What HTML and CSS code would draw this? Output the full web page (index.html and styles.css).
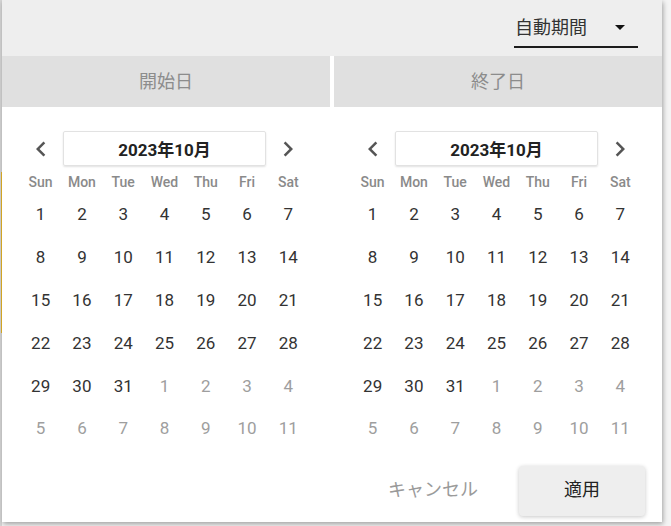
FILE: index.html
```html
<!DOCTYPE html>
<html lang="ja">
<head>
<meta charset="utf-8">
<title>期間選択</title>
<link rel="stylesheet" href="styles.css">
</head>
<body>
<div class="dialog">
  <div class="dialog-head">
    <div class="select">
      <span class="select-text">自動期間</span>
      <svg class="select-arrow" viewBox="0 0 24 24" width="24" height="24"><path d="M7 10l5 5 5-5z" fill="#111"/></svg>
    </div>
  </div>
  <div class="tabs">
    <div class="tab">開始日</div>
    <div class="tab">終了日</div>
  </div>
  <div class="calendars">
    <div class="cal">
      <div class="cal-nav">
        <span class="nav-btn"><svg viewBox="0 0 24 24" width="30" height="30"><path d="M15.41 7.41L14 6l-6 6 6 6 1.41-1.41L10.83 12z" fill="#555"/></svg></span>
        <div class="month-box">2023年10月</div>
        <span class="nav-btn"><svg viewBox="0 0 24 24" width="30" height="30"><path d="M10 6L8.59 7.41 13.17 12l-4.58 4.59L10 18l6-6z" fill="#555"/></svg></span>
      </div>
      <div class="weekdays"><span>Sun</span><span>Mon</span><span>Tue</span><span>Wed</span><span>Thu</span><span>Fri</span><span>Sat</span></div>
      <div class="days">
        <span>1</span><span>2</span><span>3</span><span>4</span><span>5</span><span>6</span><span>7</span>
        <span>8</span><span>9</span><span>10</span><span>11</span><span>12</span><span>13</span><span>14</span>
        <span>15</span><span>16</span><span>17</span><span>18</span><span>19</span><span>20</span><span>21</span>
        <span>22</span><span>23</span><span>24</span><span>25</span><span>26</span><span>27</span><span>28</span>
        <span>29</span><span>30</span><span>31</span><span class="other">1</span><span class="other">2</span><span class="other">3</span><span class="other">4</span>
        <span class="other">5</span><span class="other">6</span><span class="other">7</span><span class="other">8</span><span class="other">9</span><span class="other">10</span><span class="other">11</span>
      </div>
    </div>
    <div class="cal">
      <div class="cal-nav">
        <span class="nav-btn"><svg viewBox="0 0 24 24" width="30" height="30"><path d="M15.41 7.41L14 6l-6 6 6 6 1.41-1.41L10.83 12z" fill="#555"/></svg></span>
        <div class="month-box">2023年10月</div>
        <span class="nav-btn"><svg viewBox="0 0 24 24" width="30" height="30"><path d="M10 6L8.59 7.41 13.17 12l-4.58 4.59L10 18l6-6z" fill="#555"/></svg></span>
      </div>
      <div class="weekdays"><span>Sun</span><span>Mon</span><span>Tue</span><span>Wed</span><span>Thu</span><span>Fri</span><span>Sat</span></div>
      <div class="days">
        <span>1</span><span>2</span><span>3</span><span>4</span><span>5</span><span>6</span><span>7</span>
        <span>8</span><span>9</span><span>10</span><span>11</span><span>12</span><span>13</span><span>14</span>
        <span>15</span><span>16</span><span>17</span><span>18</span><span>19</span><span>20</span><span>21</span>
        <span>22</span><span>23</span><span>24</span><span>25</span><span>26</span><span>27</span><span>28</span>
        <span>29</span><span>30</span><span>31</span><span class="other">1</span><span class="other">2</span><span class="other">3</span><span class="other">4</span>
        <span class="other">5</span><span class="other">6</span><span class="other">7</span><span class="other">8</span><span class="other">9</span><span class="other">10</span><span class="other">11</span>
      </div>
    </div>
  </div>
  <div class="footer">
    <button class="btn btn-cancel">キャンセル</button>
    <button class="btn btn-apply">適用</button>
  </div>
</div>
</body>
</html>
```
FILE: styles.css
```css
html, body {
  margin: 0;
  padding: 0;
}
body {
  width: 671px;
  height: 526px;
  overflow: hidden;
  font-family: Roboto, "Noto Sans CJK JP", sans-serif;
  background:
    linear-gradient(#e8b628, #e8b628) 1px 172px / 1px 161px no-repeat,
    linear-gradient(#d6d6d6, #d6d6d6) 0 0 / 2px 100% no-repeat,
    #f4f4f4;
}
.dialog {
  margin-left: 2px;
  width: 660px;
  height: 522px;
  background: #fff;
  box-shadow: 1px 2px 5px rgba(0, 0, 0, 0.35);
  display: flex;
  flex-direction: column;
}
.dialog-head {
  height: 56px;
  background: #eeeeee;
  display: flex;
  justify-content: flex-end;
  align-items: flex-start;
  padding-right: 24px;
}
.select {
  margin-top: 14px;
  width: 117px;
  height: 26px;
  padding: 0 6px 6px 1px;
  border-bottom: 2px solid #1c1c1c;
  box-sizing: content-box;
  display: flex;
  align-items: center;
  justify-content: space-between;
}
.select-text {
  font-family: "Noto Sans CJK JP", sans-serif;
  font-size: 18px;
  color: #333;
  line-height: 26px;
  padding-bottom: 2px;
}
.select-arrow {
  display: block;
}
.tabs {
  display: grid;
  grid-template-columns: 1fr 1fr;
  column-gap: 4px;
  height: 51px;
}
.tab {
  background: #e0e0e0;
  color: #8c8c8c;
  font-family: "Noto Sans CJK JP", sans-serif;
  font-size: 18px;
  display: flex;
  align-items: center;
  justify-content: center;
  padding-bottom: 4px;
}
.calendars {
  display: grid;
  grid-template-columns: 1fr 1fr;
  column-gap: 4px;
}
.cal {
  padding: 24px 21px 0 18px;
}
.cal-nav {
  display: grid;
  grid-template-columns: repeat(7, 1fr);
  height: 35px;
}
.nav-btn {
  display: flex;
  align-items: center;
  justify-content: center;
}
.nav-btn svg {
  display: block;
}
.month-box {
  grid-column: 2 / 7;
  margin: 0 2px;
  border: 1px solid #e2e2e2;
  border-radius: 2px;
  box-shadow: 0 1px 2px rgba(0, 0, 0, 0.12);
  display: flex;
  align-items: center;
  justify-content: center;
  font-size: 17px;
  font-weight: 700;
  color: #222;
}
.weekdays {
  margin-top: 5px;
  display: grid;
  grid-template-columns: repeat(7, 1fr);
  height: 22px;
  line-height: 22px;
  font-size: 14px;
  font-weight: 500;
  color: #8a8a8a;
  text-align: center;
}
.days {
  display: grid;
  grid-template-columns: repeat(7, 1fr);
  grid-auto-rows: 42.8px;
  font-size: 17px;
  color: #333;
  text-align: center;
}
.days span {
  display: flex;
  align-items: center;
  justify-content: center;
}
.days .other {
  color: #9e9e9e;
}
.footer {
  margin-top: 16px;
  display: flex;
  justify-content: flex-end;
  padding-right: 17px;
  gap: 23px;
}
.btn {
  width: 126px;
  height: 50px;
  border: none;
  border-radius: 4px;
  font-family: "Noto Sans CJK JP", sans-serif;
  font-size: 18px;
  padding: 0 0 5px;
  cursor: pointer;
}
.btn-cancel {
  background: transparent;
  color: #9a9a9a;
}
.btn-apply {
  background: #eeeeee;
  color: #222;
  box-shadow: 0 1px 4px rgba(0, 0, 0, 0.22);
}
```
